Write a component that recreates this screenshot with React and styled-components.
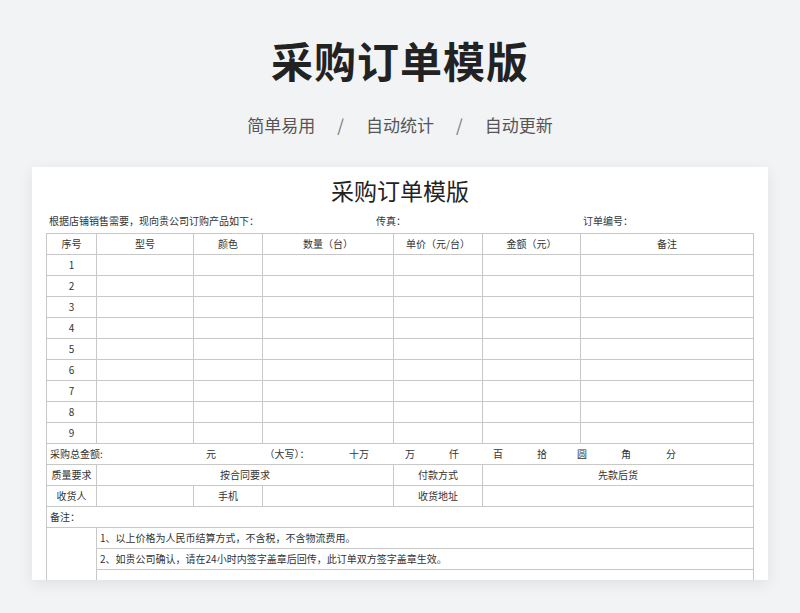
import React from 'react'
import styled, { createGlobalStyle } from 'styled-components'

const Global = createGlobalStyle`
  body {
    margin: 0;
    background: #f2f3f5;
    font-family: "Noto Sans CJK SC", "Noto Sans", sans-serif;
  }
`

const cols = [50, 97, 69, 131, 89, 98, 173]
const heads = ['序号', '型号', '颜色', '数量（台）', '单价（元/台）', '金额（元）', '备注']
const money = [
  ['元', 141, 40], ['（大写）：', 202, 70], ['十万', 289, 40], ['万', 340, 40],
  ['仟', 384, 40], ['百', 428, 40], ['拾', 472, 40], ['圆', 512, 40],
  ['角', 556, 40], ['分', 601, 40],
]

export default function App() {
  return (
    <S.Page>
      <Global />
      <S.Title>采购订单模版</S.Title>
      <S.Sub>
        <span>简单易用</span><S.Slash>/</S.Slash>
        <span>自动统计</span><S.Slash>/</S.Slash>
        <span>自动更新</span>
      </S.Sub>
      <S.Card>
        <S.DocTitle>采购订单模版</S.DocTitle>
        <S.Info>
          <S.InfoItem w={327}>根据店铺销售需要，现向贵公司订购产品如下：</S.InfoItem>
          <S.InfoItem w={207}>传真：</S.InfoItem>
          <S.InfoItem>订单编号：</S.InfoItem>
        </S.Info>
        <S.Table>
          <colgroup>
            {cols.map((w, i) => <col key={i} style={{ width: w }} />)}
          </colgroup>
          <tbody>
            <tr>{heads.map(h => <S.Td key={h}>{h}</S.Td>)}</tr>
            {Array.from({ length: 9 }, (_, r) => (
              <tr key={r}>
                <S.Td>{r + 1}</S.Td>
                {cols.slice(1).map((_, i) => <S.Td key={i} />)}
              </tr>
            ))}
            <tr>
              <S.Td colSpan={7} align="left">
                <S.Money>
                  <span>采购总金额:</span>
                  {money.map(([t, x, w]) => (
                    <S.Slot key={t} style={{ left: x, width: w }}>{t}</S.Slot>
                  ))}
                </S.Money>
              </S.Td>
            </tr>
            <tr>
              <S.Td>质量要求</S.Td>
              <S.Td colSpan={3}>按合同要求</S.Td>
              <S.Td>付款方式</S.Td>
              <S.Td colSpan={2}>先款后货</S.Td>
            </tr>
            <tr>
              <S.Td>收货人</S.Td>
              <S.Td />
              <S.Td>手机</S.Td>
              <S.Td />
              <S.Td>收货地址</S.Td>
              <S.Td colSpan={2} />
            </tr>
            <tr><S.Td colSpan={7} align="left">备注：</S.Td></tr>
            <tr>
              <S.Td rowSpan={3} />
              <S.Td colSpan={6} align="left">1、以上价格为人民币结算方式，不含税，不含物流费用。</S.Td>
            </tr>
            <tr>
              <S.Td colSpan={6} align="left">2、如贵公司确认，请在24小时内签字盖章后回传，此订单双方签字盖章生效。</S.Td>
            </tr>
            <tr><S.Td colSpan={6} /></tr>
          </tbody>
        </S.Table>
      </S.Card>
    </S.Page>
  )
}

const S = {
  Page: styled.div`
    width: 800px;
    height: 613px;
    display: flex;
    flex-direction: column;
    align-items: center;
    overflow: hidden;
  `,
  Title: styled.h1`
    margin: 34px 0 0;
    font-size: 42px;
    line-height: 52px;
    font-weight: 700;
    color: #222;
    letter-spacing: 1px;
  `,
  Sub: styled.div`
    margin-top: 27px;
    display: flex;
    gap: 22px;
    font-size: 17px;
    line-height: 24px;
    color: #555;
  `,
  Slash: styled.span`
    color: #777;
  `,
  Card: styled.div`
    margin-top: 30px;
    width: 736px;
    height: 413px;
    background: #fff;
    box-shadow: 0 4px 14px rgba(0, 0, 0, 0.08);
    padding: 0 14px;
    box-sizing: border-box;
    overflow: hidden;
  `,
  DocTitle: styled.div`
    text-align: center;
    font-size: 23px;
    line-height: 30px;
    margin-top: 8px;
    color: #222;
  `,
  Info: styled.div`
    display: flex;
    font-size: 10px;
    line-height: 14px;
    color: #333;
    margin: 9px 0 5px 3px;
  `,
  InfoItem: styled.div`
    width: ${p => (p.w ? `${p.w}px` : 'auto')};
  `,
  Table: styled.table`
    width: 707px;
    border-collapse: collapse;
    table-layout: fixed;
    font-size: 10px;
    color: #333;
  `,
  Td: styled.td`
    border: 1px solid #c8c8c8;
    height: 20px;
    padding: 0 3px;
    text-align: ${p => p.align || 'center'};
    white-space: nowrap;
    overflow: hidden;
    line-height: 14px;
  `,
  Money: styled.div`
    position: relative;
    height: 14px;
  `,
  Slot: styled.span`
    position: absolute;
    top: 0;
    text-align: center;
  `,
}
